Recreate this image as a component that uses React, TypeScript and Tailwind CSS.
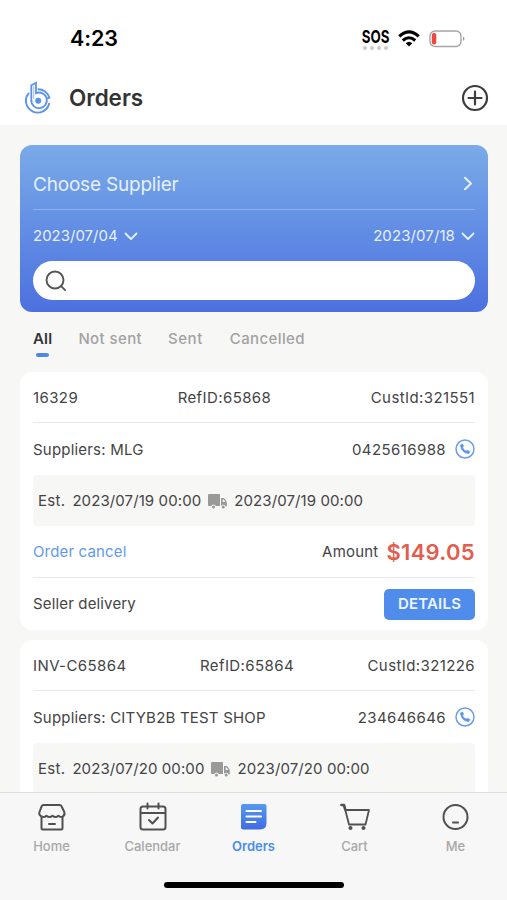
import React from "react";

function PhoneIcon() {
  return (
    <svg width="20" height="20" viewBox="0 0 20 20" fill="none" className="ml-[9px] shrink-0">
      <circle cx="10" cy="10" r="9" stroke="#6a9df0" strokeWidth="1.5" />
      <path
        d="M6.300 5.300 7.100 5Q7.700 4.900 7.900 5.400L8.500 6.900Q8.700 7.400 8.300 7.800L7.600 8.500Q8.600 10.900 11.100 12.100L11.900 11.500Q12.300 11.200 12.800 11.400L14.400 12.100Q14.900 12.400 14.700 12.900L14.300 13.900Q14 14.700 13 14.600Q6.600 13.700 5.500 6.800Q5.400 5.700 6.300 5.300Z"
        fill="#5b92ee"
        stroke="#5b92ee"
        strokeWidth="0.500"
      />
    </svg>
  );
}

function TruckIcon() {
  return (
    <svg width="19" height="15" viewBox="0 0 19 15" className="mr-[7px] ml-[7px] shrink-0" fill="#999">
      <path d="M1 0h10.200q.8 0 .8.800V12H7.800a2.500 2.500 0 0 0-4.600 0H1Q0 12 0 11V1Q0 0 1 0Z" />
      <path d="M13 4h2.400q.6 0 1 .5L18.600 7.600q.2.300.2.700v3.900h-1.500a2.300 2.300 0 0 0-4.300 0ZM14.700 5.400v2.500h2.600L15.700 5.400Z" fillRule="evenodd" />
      <circle cx="5.500" cy="12.900" r="1.500" />
      <circle cx="15.200" cy="12.900" r="1.500" />
    </svg>
  );
}

function ChevronDown() {
  return (
    <svg width="14" height="9" viewBox="0 0 14 9" fill="none" stroke="#e6f0fd" strokeWidth="1.8" strokeLinecap="round" strokeLinejoin="round">
      <path d="m1.500 1.500 5.500 5.500 5.500-5.500" />
    </svg>
  );
}

type Order = {
  id: string;
  refId: string;
  cust: string;
  supplier: string;
  phone: string;
  date: string;
  amount?: string;
};

function OrderCard({ o }: { o: Order }) {
  return (
    <section
      className={
        o.amount
          ? "h-[258px] shrink-0 rounded-xl bg-white px-[13px] text-[15px] tracking-[0.3px] text-[#444]"
          : "h-[160px] shrink-0 rounded-t-xl bg-white px-[13px] text-[15px] tracking-[0.3px] text-[#444]"
      }
    >
      <div className="flex h-[51px] items-center justify-between border-b border-[#e9e9e9] pt-[2px]">
        <span className="tracking-[0.4px]">{o.id}</span>
        <span className="tracking-[0.4px]">{o.refId}</span>
        <span className="tracking-[0.4px]">{o.cust}</span>
      </div>
      <div className="flex h-[52px] items-center">
        <span className="pt-[2px] tracking-[0.2px]">{o.supplier}</span>
        <span className="ml-auto pt-[2px] tracking-[0.4px]">{o.phone}</span>
        <PhoneIcon />
      </div>
      <div className="flex h-[51px] items-center rounded-sm bg-[#f7f7f6] pt-[1px] pl-[5px] tracking-[0.1px]">
        <span className="mr-[7px] tracking-[0.3px]">Est.</span>
        <span>{o.date}</span>
        <TruckIcon />
        <span>{o.date}</span>
      </div>
      {o.amount && (
        <>
          <div className="flex h-[52px] items-center border-b border-[#e9e9e9] pt-[1px]">
            <span className="tracking-[0.150px] text-[#6299ee]">Order cancel</span>
            <span className="ml-auto tracking-[0.2px]">Amount</span>
            <span className="ml-2 text-[22px] font-semibold tracking-[0.3px] text-[#e35c4c]">{o.amount}</span>
          </div>
          <div className="flex h-[52px] items-center justify-between">
            <span className="tracking-[0.150px]">Seller delivery</span>
            <button className="h-[31px] w-[91px] rounded-[5px] bg-[#508cec] text-[15px] font-semibold tracking-[0.2px] text-[#edf5ff]">
              DETAILS
            </button>
          </div>
        </>
      )}
    </section>
  );
}

const orders: Order[] = [
  { id: "16329", refId: "RefID:65868", cust: "CustId:321551", supplier: "Suppliers: MLG", phone: "0425616988", date: "2023/07/19 00:00", amount: "$149.05" },
  { id: "INV-C65864", refId: "RefID:65864", cust: "CustId:321226", supplier: "Suppliers: CITYB2B TEST SHOP", phone: "234646646", date: "2023/07/20 00:00" },
];

function NavItem({ label, active, children }: { label: string; active?: boolean; children: React.ReactNode }) {
  return (
    <div className="flex w-[101px] flex-col items-center">
      <svg width="30" height="30" viewBox="0 0 30 30" fill="none" stroke="#505050" strokeWidth="2" strokeLinecap="round" strokeLinejoin="round">
        {children}
      </svg>
      <span className={active ? "mt-[4px] text-[13px] leading-5 font-semibold text-[#478bf0]" : "mt-[4px] text-[13px] leading-5 font-medium text-[#a8a8a8]"}>
        {label}
      </span>
    </div>
  );
}

export default function App() {
  return (
    <div className="flex h-[900px] w-[507px] flex-col overflow-hidden bg-[#f7f7f6] font-['Inter',sans-serif]">
      <header className="h-[125px] shrink-0 bg-white">
        <div className="flex h-[70px] items-center pt-[7px] pr-[41px] pl-[70px]">
          <span className="text-[21.500px] font-semibold tracking-[-0.1px] text-black">4:23</span>
          <div className="ml-auto flex flex-col items-center">
            <span className="-mx-[5px] h-[17px] scale-x-[.74] text-[18px] leading-[17px] font-bold text-black">SOS</span>
            <div className="mt-[1px] flex gap-[3px]">
              {[0, 1, 2, 3].map((i) => (
                <i key={i} className="h-1 w-1 rounded-full bg-[#ccc]" />
              ))}
            </div>
          </div>
          <svg width="22" height="18" viewBox="0 0 22 18" fill="none" stroke="#000" strokeWidth="3.100" className="ml-[9px]">
            <path d="M1.300 6.300Q11-2.400 20.700 6.300" />
            <path d="M4.800 10.500Q11 5 17.200 10.500" />
            <path d="M7.700 13.200Q11 10.200 14.300 13.200L11 16.600Z" fill="#000" stroke="none" />
          </svg>
          <svg width="37" height="18" viewBox="0 0 37 18" className="ml-[9px]">
            <rect x="1" y="1" width="31" height="15.500" rx="5" fill="#fff" stroke="#a5a5a5" strokeWidth="1.400" />
            <rect x="2.800" y="3" width="4.500" height="11.500" rx="2" fill="#ed493f" />
            <path d="M34 6.500q3 2.200 0 4.500Z" fill="#999" />
          </svg>
        </div>
        <div className="flex h-[55px] items-center pr-[18px] pl-[25px]">
          <svg width="27" height="34" viewBox="0 1 27 34" fill="none" stroke="#5b93e9" strokeWidth="1.900">
            <path d="M4 12.800A11.800 11.800 0 1 0 24.300 23" />
            <path d="M12.700 9.200A11.800 11.800 0 0 1 24.400 17.700L21.500 18.600" />
            <path d="M6.300 22V5.200L11 3V13.200A7.800 7.800 0 1 1 6.300 20" strokeWidth="1.800" />
            <path d="M8.700 6V19" strokeWidth="0.600" />
            <circle cx="13.200" cy="20.800" r="3" fill="#5b93e9" stroke="none" />
          </svg>
          <h1 className="ml-[17px] text-[22.500px] font-semibold tracking-[-0.050px] text-[#333]">Orders</h1>
          <svg width="28" height="28" viewBox="0 0 28 28" fill="none" stroke="#3d3d3d" strokeWidth="2.200" className="ml-auto">
            <circle cx="14" cy="14" r="12" />
            <path d="M7.500 14h13M14 7.500v13" strokeLinecap="round" />
          </svg>
        </div>
      </header>

      <main className="min-h-0 flex-1 overflow-hidden pt-5 pr-[19px] pl-5">
        <section className="h-[167px] rounded-xl bg-linear-to-b from-[#7aaae8] to-[#4d70df] px-[13px] pt-[13px] text-[#e6f0fd]">
          <div className="flex h-[52px] items-center justify-between border-b border-white/25">
            <span className="pt-[3px] text-[19px] tracking-[-0.2px]">Choose Supplier</span>
            <svg width="10" height="15" viewBox="0 0 10 15" fill="none" stroke="#e6f0fd" strokeWidth="2" strokeLinecap="round" strokeLinejoin="round" className="mr-[2px]">
              <path d="m2 1.800 6 5.700-6 5.700" />
            </svg>
          </div>
          <div className="flex h-[51px] items-center justify-between pt-[2px] text-[15px]">
            <span className="flex items-center gap-[6px]">2023/07/04 <ChevronDown /></span>
            <span className="flex items-center gap-[6px] tracking-[0.1px]">2023/07/18 <ChevronDown /></span>
          </div>
          <div className="flex h-[39px] items-center rounded-full bg-white pl-3">
            <svg width="22" height="22" viewBox="0 0 22 22" fill="none" stroke="#555" strokeWidth="1.900" strokeLinecap="round">
              <circle cx="10" cy="10" r="8.500" />
              <path d="m16.100 16.100 4 4" />
            </svg>
          </div>
        </section>

        <nav className="flex h-[60px] items-start px-[13px] pt-[15px] text-[15px] leading-[23px] font-medium tracking-[0.4px] text-[#a2a2a2]">
          <span className="flex flex-col items-center font-semibold tracking-[0.2px] text-[#333]">
            All
            <i className="mt-[3px] h-1 w-[13px] rounded-full bg-[#5187e3]" />
          </span>
          <span className="ml-[26px]">Not sent</span>
          <span className="ml-[26px] tracking-[0.5px]">Sent</span>
          <span className="ml-[27px] tracking-[0.4px]">Cancelled</span>
        </nav>

        <div className="flex flex-col gap-[10px]">
          {orders.map((o) => (
            <OrderCard key={o.id} o={o} />
          ))}
        </div>
      </main>

      <footer className="h-[108px] shrink-0 border-t border-[#ddd] bg-[#f7f7f7]">
        <div className="flex justify-center pt-[9px]">
          <NavItem label="Home">
            <path d="M6.500 3h16q1.500 0 2 1.200L27.300 10q1 3.300-1.800 4.700-2.300 1-4-1-3 2.500-6 0-3 2.500-6 0-2 2-4.300 1Q1.300 13.300 2.500 10L4.700 4.200Q5.200 3 6.500 3Z" />
            <path d="M4.500 15V26q0 1.500 1.500 1.500h18q1.500 0 1.500-1.500V15M12 22h6" />
          </NavItem>
          <NavItem label="Calendar">
            <rect x="2.500" y="4.500" width="25" height="23" rx="2.500" />
            <path d="M3 11h24M9.500 1.500v5M20.500 1.500v5M11 18l3.500 3.500 5.500-6" />
          </NavItem>
          <NavItem label="Orders" active>
            <defs>
              <linearGradient id="order-fill" x1="0" y1="0" x2="0" y2="1">
                <stop stopColor="#559af0" />
                <stop offset="1" stopColor="#416be1" />
              </linearGradient>
            </defs>
            <path d="M4 2h21.500q2 0 2 2v17q0 6.500-6.500 6.500H4q-2 0-2-2V4q0-2 2-2Z" fill="url(#order-fill)" stroke="none" />
            <path d="M7.500 9h14.500M7.500 14.500h14.500M7.500 20h9" stroke="#fff" strokeWidth="2" />
          </NavItem>
          <NavItem label="Cart">
            <path d="M1.500 3H4L9 22.500h16.500L29 8H5.500" strokeWidth="1.800" />
            <path d="M1.500 3H4L5.200 7.500" strokeWidth="2.600" />
            <circle cx="10.500" cy="26" r="1" />
            <circle cx="23.500" cy="26" r="1" />
          </NavItem>
          <NavItem label="Me">
            <circle cx="14.500" cy="15" r="12" />
            <path d="M12 20.500h5" />
          </NavItem>
        </div>
        <div className="mx-auto mt-[26px] h-[6px] w-[180px] rounded-full bg-black" />
      </footer>
    </div>
  );
}
